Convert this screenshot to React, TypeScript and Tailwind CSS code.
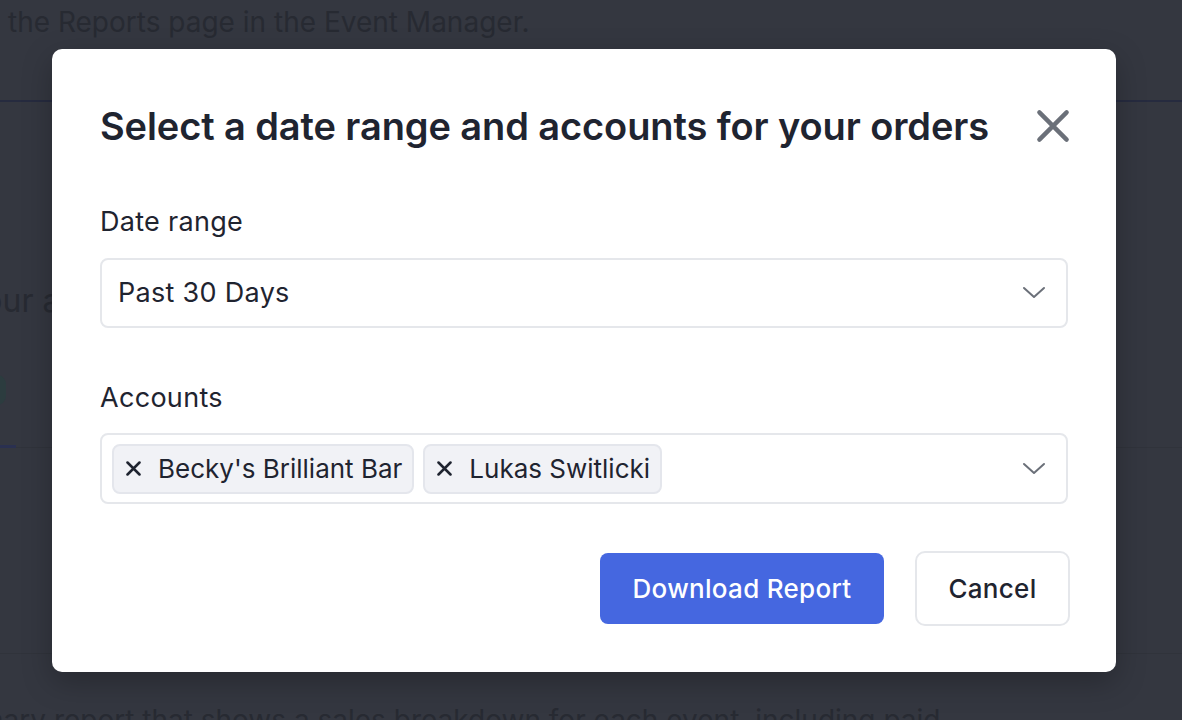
const font = { fontFamily: 'Inter, "Noto Sans", sans-serif' };

function Cross({ size, stroke, className }: { size: number; stroke: number; className?: string }) {
  return (
    <svg width={size} height={size} viewBox="0 0 20 20" className={className} fill="none">
      <path d="M2 2L18 18M18 2L2 18" stroke="currentColor" strokeWidth={stroke} strokeLinecap="round" />
    </svg>
  );
}

function Chevron() {
  return (
    <svg width="24" height="14" viewBox="0 0 24 14" fill="none" className="text-[#6b7079]">
      <path d="M2 2L12 11L22 2" stroke="currentColor" strokeWidth="2" strokeLinecap="round" strokeLinejoin="round" />
    </svg>
  );
}

function Chip({ label }: { label: string }) {
  return (
    <div className="flex h-[50px] items-center gap-[17px] rounded-lg border-2 border-[#e4e6ec] bg-[#f1f2f6] pl-[12px] pr-[10px]">
      <Cross size={15} stroke={3.4} className="text-[#1f2430]" />
      <span className="text-[26px] tracking-[0px] text-[#1f2430]">{label}</span>
    </div>
  );
}

export default function App() {
  return (
    <div className="relative h-[720px] w-[1182px] overflow-hidden bg-[#343740]" style={font}>
      {/* page behind the overlay */}
      <div className="flex flex-col">
        <div className="h-[102px] shrink-0 border-b-2 border-[#262b3f] pl-[8px] pt-[1px] text-[28px] text-[#272a32]">
          the Reports page in the Event Manager.
        </div>
        <div className="mt-[175px] -ml-[36px] shrink-0 text-[32px] text-[#272a32]">Your account</div>
        <div className="mt-[50px] -ml-[12px] h-[30px] w-[18px] shrink-0 rounded-full bg-[#2c3c3f]" />
        <div className="mt-[40px] flex h-[3px] shrink-0 border-b border-[#30333b]">
          <div className="h-[3px] w-[16px] bg-[#2a3050]" />
        </div>
        <div className="mt-[205px] shrink-0 border-t border-[#30333b]" />
        <div className="mt-[45px] -ml-[80px] shrink-0 whitespace-nowrap text-[28px] text-[#272a32]">
          Summary report that shows a sales breakdown for each event, including paid
        </div>
      </div>

      {/* modal */}
      <div className="absolute left-[52px] top-[49px] w-[1064px] rounded-[10px] bg-white px-[48px] pb-[46px] pt-[48px] shadow-[0_10px_30px_rgba(0,0,0,0.25)]">
        <div className="flex h-[58px] items-center justify-between">
          <h2 className="text-[38px] font-semibold tracking-[-0.1px] text-[#1f2430]">
            Select a date range and accounts for your orders
          </h2>
          <Cross size={34} stroke={2.6} className="-mr-[2px] text-[#6b7079]" />
        </div>

        <div className="mt-[51px] text-[27px] leading-[32px] tracking-[0.3px] text-[#1f2430]">Date range</div>
        <div className="mt-[20px] flex h-[70px] items-center justify-between rounded-lg border-2 border-[#e5e7eb] pl-[16px] pr-[20px]">
          <span className="text-[27px] tracking-[0.3px] text-[#1f2430]">Past 30 Days</span>
          <Chevron />
        </div>

        <div className="mt-[54px] text-[27px] leading-[32px] tracking-[0.3px] text-[#1f2430]">Accounts</div>
        <div className="mt-[19px] flex h-[71px] items-center justify-between rounded-lg border-2 border-[#e5e7eb] pl-[10px] pr-[20px]">
          <div className="flex gap-[9px]">
            <Chip label="Becky's Brilliant Bar" />
            <Chip label="Lukas Switlicki" />
          </div>
          <Chevron />
        </div>

        <div className="mt-[47px] flex items-center justify-end gap-[31px]">
          <button className="h-[71px] w-[284px] rounded-lg bg-[#4567e0] text-[26px] font-medium tracking-[0.3px] text-white">
            Download Report
          </button>
          <button className="-mr-[2px] h-[75px] w-[155px] rounded-[10px] border-2 border-[#e5e7eb] bg-white text-[26px] font-medium tracking-[0.3px] text-[#1f2430]">
            Cancel
          </button>
        </div>
      </div>
    </div>
  );
}
